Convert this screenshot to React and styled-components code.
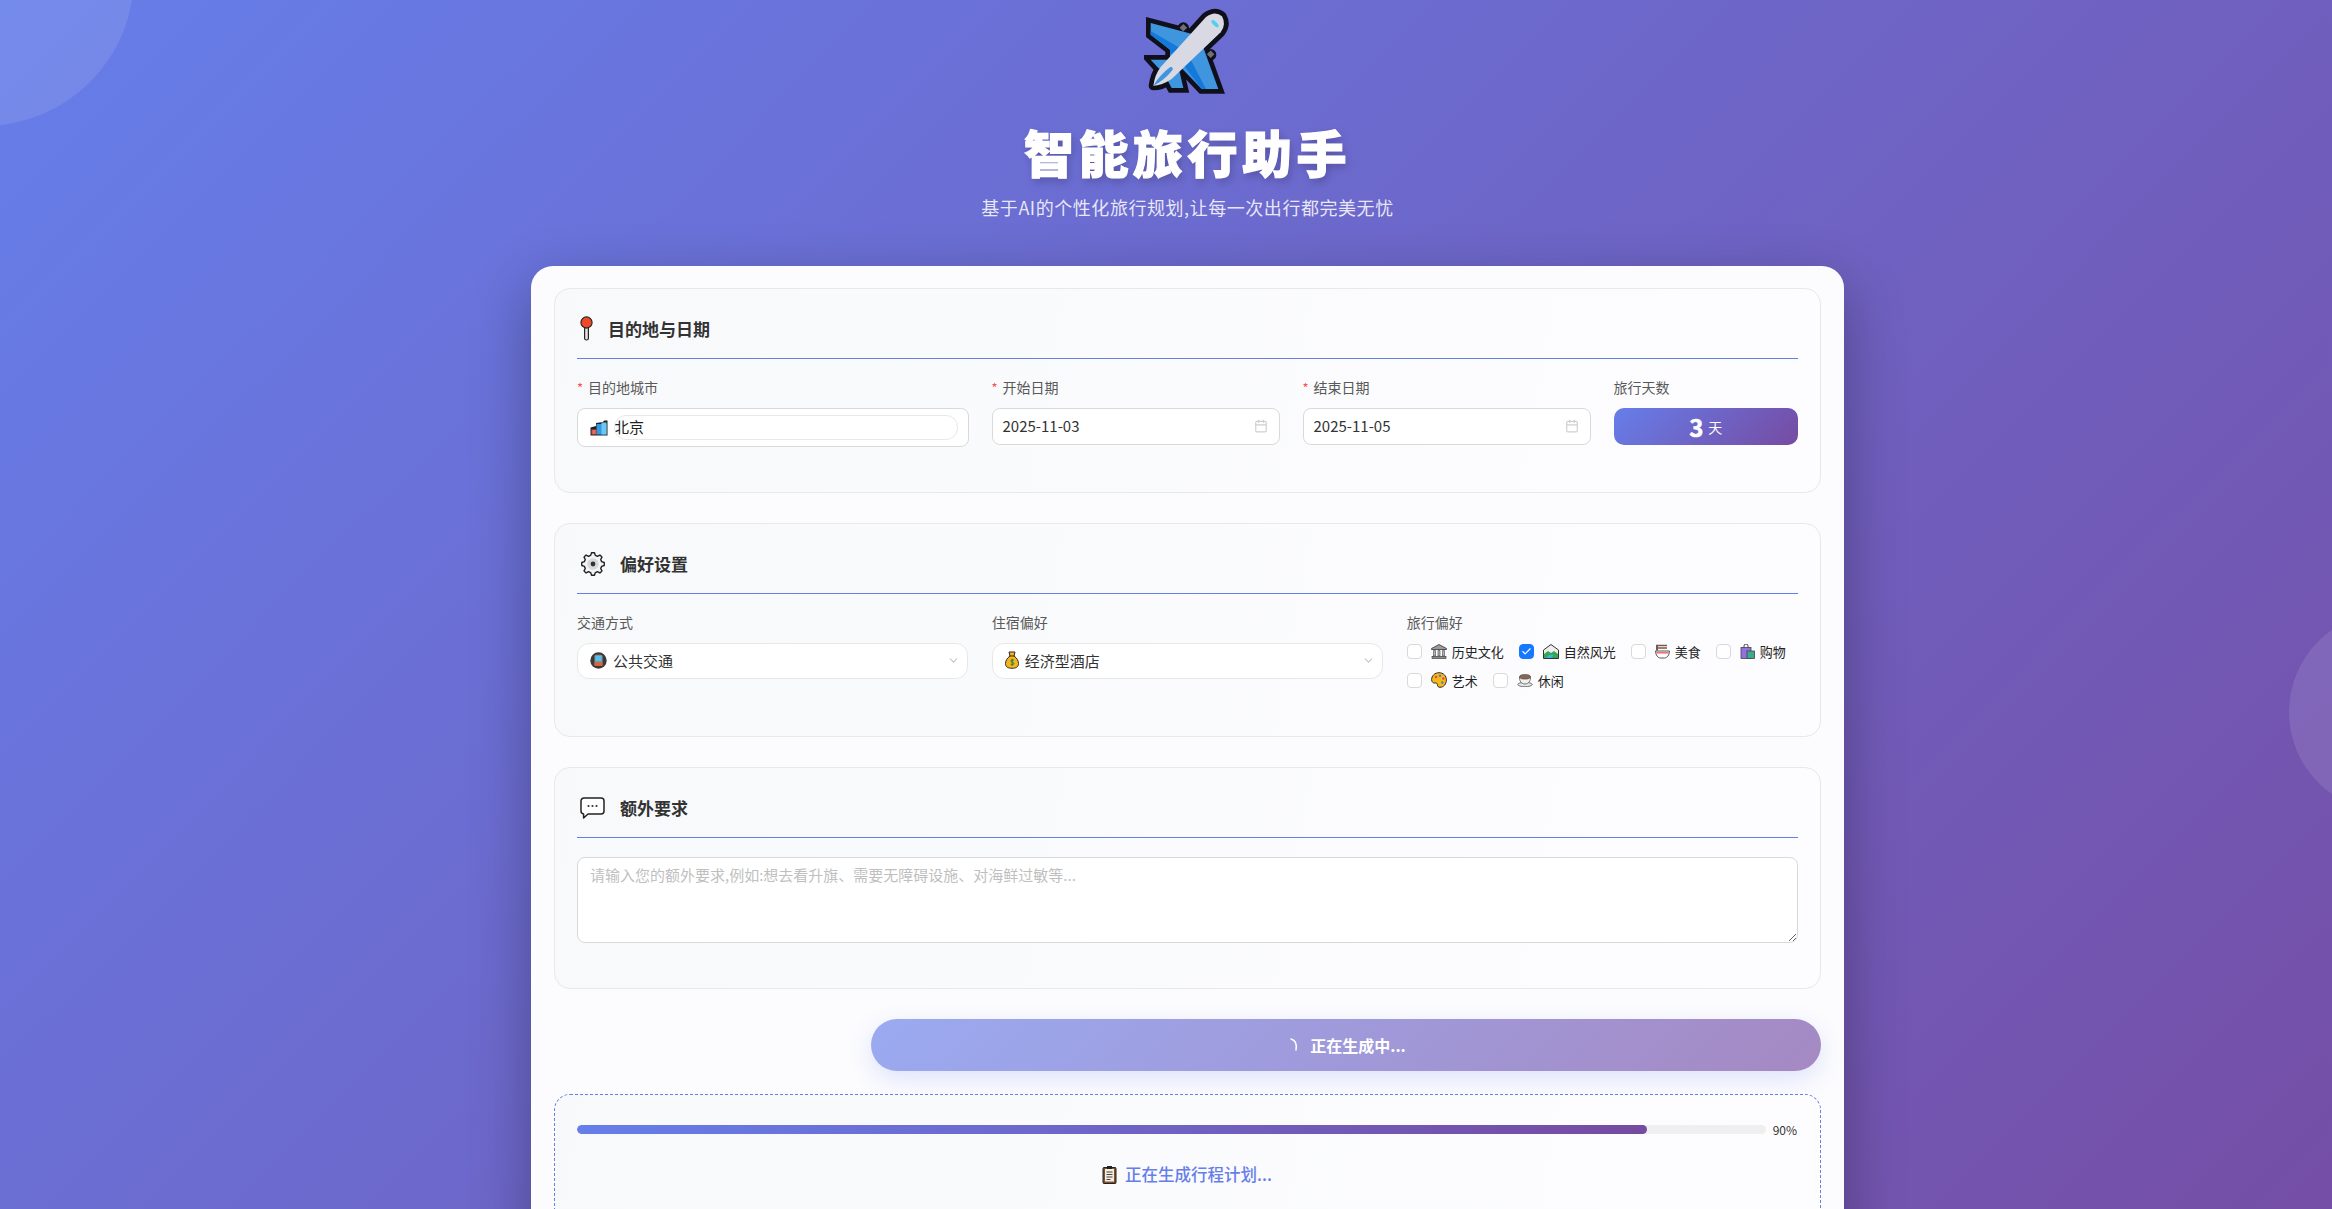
import React from 'react';
import styled, { createGlobalStyle } from 'styled-components';
import { Calendar, ChevronDown, Check } from 'lucide-react';

const GlobalStyle = createGlobalStyle`
  html, body {
    margin: 0;
    padding: 0;
    height: 1209px;
    overflow: hidden;
    font-family: "Noto Sans CJK SC", "Noto Sans", sans-serif;
  }
  * { box-sizing: border-box; }
`;

const Page = styled.div`
  position: relative;
  height: 1209px;
  overflow: hidden;
  padding: 0 488px 0 531px;
  background: linear-gradient(135deg, #667eea 0%, #764ba2 100%) 0 0 / 100% 1450px;
`;

const Bubble = styled.div`
  position: absolute;
  top: ${(p) => p.$top}px;
  left: ${(p) => p.$left}px;
  width: ${(p) => p.$size}px;
  height: ${(p) => p.$size}px;
  border-radius: 50%;
  background: rgba(255, 255, 255, 0.1);
`;

const Header = styled.header`
  position: relative;
  display: flex;
  flex-direction: column;
  align-items: center;
  height: 266px;
  padding-top: 7px;
  color: #fff;
`;

const PlaneBox = styled.div`
  display: flex;
  height: 88px;
`;

const Title = styled.h1`
  margin: 20px 0 6px;
  font-size: 50px;
  line-height: 72px;
  font-weight: 900;
  letter-spacing: 4.5px;
  -webkit-text-stroke: 1.2px #fff;
  text-shadow: 2px 4px 8px rgba(0, 0, 0, 0.22);
`;

const Subtitle = styled.p`
  margin: 0;
  font-size: 18px;
  line-height: 28px;
  letter-spacing: 0.55px;
  color: rgba(255, 255, 255, 0.85);
`;

const Card = styled.main`
  position: relative;
  display: flex;
  flex-direction: column;
  height: 1100px;
  padding: 22px 23px 0;
  border-radius: 22px;
  background: rgba(255, 255, 255, 0.98);
  box-shadow: 0 20px 60px rgba(0, 0, 0, 0.3);
`;

const Section = styled.section`
  padding: 0 22px 45px;
  margin-bottom: 30px;
  border: 1px solid #e8e8e8;
  border-radius: 16px;
  background: linear-gradient(100deg, #f8f9fb 0%, #fdfdff 100%);
`;

const SectionHead = styled.div`
  display: flex;
  align-items: center;
  gap: 12px;
  height: 70px;
  padding: 24px 0 14px;
  margin-bottom: ${(p) => p.$gap || 17}px;
  border-bottom: 1px solid #667eea;
  font-size: 17px;
  font-weight: 700;
  color: #333;
`;

const HeadIcon = styled.span`
  display: flex;
  justify-content: center;
  width: ${(p) => p.$width}px;
`;

const FieldGrid = styled.div`
  display: grid;
  grid-template-columns: ${(p) => p.$columns};
  column-gap: ${(p) => p.$gap}px;
`;

const Label = styled.label`
  display: block;
  height: 22px;
  margin-bottom: 10px;
  font-size: 14px;
  line-height: 22px;
  color: #595959;
  &::before {
    content: ${(p) => (p.$required ? '"*"' : 'none')};
    margin-right: 5px;
    color: #ff4d4f;
    font-size: 13px;
  }
`;

const CityBox = styled.div`
  display: flex;
  align-items: center;
  height: 39px;
  padding: 0 10px 0 12px;
  border: 1px solid #d9d9d9;
  border-radius: 8px;
  background: #fff;
`;

const CityInput = styled.input`
  flex: 1;
  min-width: 0;
  height: 25px;
  margin-left: 6px;
  padding: 0 0 2px;
  border: 1px solid #e8e8e8;
  border-radius: 12px;
  outline: none;
  background: #fff;
  font: inherit;
  font-size: 15px;
  text-indent: -1px;
  color: #222;
`;

const DateBox = styled.div`
  display: flex;
  align-items: center;
  justify-content: space-between;
  height: 37px;
  padding: 0 11px 2px 10px;
  border: 1px solid #d9d9d9;
  border-radius: 8px;
  background: #fff;
  font-size: 15px;
  color: #333;
`;

const DaysBox = styled.div`
  display: flex;
  align-items: center;
  justify-content: center;
  gap: 5px;
  height: 37px;
  border-radius: 10px;
  background: linear-gradient(135deg, #667eea, #764ba2);
  color: #fff;
  font-size: 14px;
  strong {
    font-size: 24px;
    font-weight: 700;
    line-height: 1;
    -webkit-text-stroke: 0.5px #fff;
  }
`;

const SelectBox = styled.div`
  display: flex;
  align-items: center;
  gap: 6px;
  height: 36px;
  padding: 0 7px 2px 12px;
  border: 1px solid #e8e8e8;
  border-radius: 12px;
  background: #fff;
  font-size: 15px;
  color: #333;
  svg:last-child {
    margin-left: auto;
  }
`;

const CheckGroup = styled.div`
  display: flex;
  flex-wrap: wrap;
  align-content: flex-start;
  column-gap: 15px;
  row-gap: 7px;
  height: 51px;
  margin-top: -3px;
`;

const CheckItem = styled.label`
  display: flex;
  align-items: center;
  height: 22px;
  font-size: 13px;
  color: #222;
`;

const CheckBox = styled.span`
  display: flex;
  align-items: center;
  justify-content: center;
  width: 15px;
  height: 15px;
  margin-right: 9px;
  border: 1px solid ${(p) => (p.$checked ? '#1677ff' : '#d9d9d9')};
  border-radius: 4px;
  background: ${(p) => (p.$checked ? '#1677ff' : '#fff')};
`;

const CheckIcon = styled.span`
  display: flex;
  margin-right: 5px;
`;

const Notes = styled.textarea`
  display: block;
  width: 100%;
  height: 86px;
  padding: 6px 12px;
  border: 1px solid #d9d9d9;
  border-radius: 8px;
  outline: none;
  background: #fff;
  font: inherit;
  font-size: 15px;
  line-height: 22px;
  &::placeholder {
    color: #bfbfbf;
  }
`;

const GenerateButton = styled.button`
  display: flex;
  flex: none;
  align-items: center;
  justify-content: center;
  gap: 10px;
  align-self: flex-end;
  width: 950px;
  height: 52px;
  margin-bottom: 23px;
  padding-left: 10px;
  border: 0;
  border-radius: 26px;
  background: linear-gradient(135deg, rgba(102, 126, 234, 0.65), rgba(118, 75, 162, 0.65));
  box-shadow: 0 8px 24px rgba(102, 126, 234, 0.2);
  color: #fff;
  font: inherit;
  font-size: 16px;
  font-weight: 700;
`;

const ProgressPanel = styled.section`
  flex: none;
  height: 220px;
  padding: 24px 23px 24px 22px;
  border: 1px dashed #667eea;
  border-radius: 16px;
  background: linear-gradient(100deg, #f8f9fb 0%, #fdfdff 100%);
`;

const ProgressRow = styled.div`
  display: flex;
  align-items: center;
  gap: 7px;
  height: 20px;
  font-size: 12px;
  color: #333;
`;

const ProgressTrack = styled.div`
  flex: 1;
  height: 9px;
  border-radius: 5px;
  background: #efefef;
  overflow: hidden;
`;

const ProgressFill = styled.div`
  height: 100%;
  border-radius: 5px;
  background: linear-gradient(90deg, #667eea, #764ba2);
`;

const Status = styled.div`
  display: flex;
  align-items: center;
  justify-content: center;
  gap: 8px;
  margin-top: 23px;
  font-size: 16.5px;
  font-weight: 500;
  color: #667eea;
`;

const Plane = () => {
  const wingA = 'M92 70 L225 105 L150 190 L150 150 L92 105 Z';
  const wingB = 'M245 130 L295 268 L245 268 L170 190 Z';
  const tailA = 'M92 180 L150 180 L130 214 L115 205 Z';
  const tailB = 'M128 215 L175 200 L190 265 L155 265 Z';
  const body = 'M258 52 Q285 32 306 50 Q320 75 302 98 L155 238 Q125 258 100 258 Q104 226 122 202 Z';
  const ink = { fill: '#10101c', stroke: '#10101c', strokeWidth: 28, strokeLinejoin: 'miter' };
  return (
    <svg width="88" height="88" viewBox="72 22 264 264">
      <circle cx="190" cy="85" r="17" fill="#10101c" />
      <circle cx="272" cy="165" r="17" fill="#10101c" />
      <path d={wingA} {...ink} />
      <path d={wingB} {...ink} />
      <path d={tailA} {...ink} />
      <path d={tailB} {...ink} />
      <path d={body} {...ink} strokeLinejoin="round" />
      <rect x="182" y="76" width="16" height="16" fill="#6f6f78" transform="rotate(45 190 84)" />
      <rect x="264" y="156" width="16" height="16" fill="#6f6f78" transform="rotate(45 272 164)" />
      <path d={wingA} fill="#3f95de" />
      <path d="M92 94 L180 145 L150 165 L150 150 L92 105 Z" fill="#1479d9" />
      <path d={wingB} fill="#3f95de" />
      <path d="M190 195 L245 268 L258 268 L212 180 Z" fill="#1479d9" />
      <path d={tailA} fill="#3f95de" />
      <path d={tailB} fill="#3f95de" />
      <path d={body} fill="#d9d9e4" />
      <path d="M100 258 Q120 225 150 203 Q160 200 158 210 Q135 240 100 258 Z" fill="#3f95de" />
      <ellipse cx="285" cy="72" rx="14" ry="6" transform="rotate(45 285 72)" fill="#4dd2f2" />
    </svg>
  );
};

const PinIcon = () => (
  <svg width="13" height="25" viewBox="0 0 13 25">
    <rect x="4.6" y="11" width="3.8" height="13" rx="1.8" fill="#e4e4e4" stroke="#222" strokeWidth="1.2" />
    <circle cx="6.5" cy="6.5" r="5.6" fill="#ee4a2a" stroke="#222" strokeWidth="1.1" />
  </svg>
);

const cogPath = () => {
  const points = [];
  for (let i = 0; i < 48; i += 1) {
    const phase = i % 6;
    const r = phase < 3 ? 11.3 : 8.9;
    const a = ((i - 1) / 48) * Math.PI * 2;
    points.push(`${(12 + r * Math.cos(a)).toFixed(2)} ${(12 + r * Math.sin(a)).toFixed(2)}`);
  }
  return `M${points.join(' L')} Z`;
};

const GearIcon = () => (
  <svg width="24" height="24" viewBox="0 0 24 24">
    <path d={cogPath()} fill="#f4f4f4" stroke="#222" strokeWidth="1.4" strokeLinejoin="round" />
    <circle cx="12" cy="12" r="5.8" fill="#d8d8d8" />
    <circle cx="12" cy="12" r="2.4" fill="#333" />
  </svg>
);

const SpeechIcon = () => (
  <svg width="25" height="22" viewBox="0 0 25 22">
    <path
      d="M4 1h17a3 3 0 0 1 3 3v10a3 3 0 0 1-3 3H8l-4.4 4v-4A3 3 0 0 1 1 14V4a3 3 0 0 1 3-3z"
      fill="#fff"
      stroke="#222"
      strokeWidth="1.5"
      strokeLinejoin="round"
    />
    <circle cx="8.5" cy="9" r="1.1" fill="#333" />
    <circle cx="12.5" cy="9" r="1.1" fill="#333" />
    <circle cx="16.5" cy="9" r="1.1" fill="#333" />
  </svg>
);

const CityIcon = () => (
  <svg width="18" height="16" viewBox="0 0 18 16">
    <path d="M.5 7.500L6 6V3l7-1 1-1.500h3.500V15.500H.5z" fill="#222" />
    <rect x="6.500" y="4" width="10" height="10.500" fill="#2f9ae6" />
    <rect x="11.500" y="2.500" width="5" height="12" fill="#6cc6ef" />
    <rect x="1.500" y="9.500" width="5" height="5" fill="#d94a3d" />
    <path d="M2.500 11h3M2.500 13h3" stroke="#f4b0a8" strokeWidth="0.7" />
  </svg>
);

const MetroIcon = () => (
  <svg width="17" height="17" viewBox="0 0 17 17">
    <circle cx="8.5" cy="8.5" r="8.2" fill="#3a3a3a" />
    <rect x="4.5" y="2.8" width="8" height="11" rx="1.5" fill="#8d8d8d" />
    <rect x="5.5" y="4" width="6" height="5" fill="#4fc3ee" />
    <rect x="4.5" y="10.5" width="8" height="3.3" fill="#e0603a" />
  </svg>
);

const BagIcon = () => (
  <svg width="14" height="18" viewBox="0 0 14 18">
    <path
      d="M4 1h6L9 5c3 2 4.500 5 4.500 7.500C13.500 16 11 17.300 7 17.300S.5 16 .5 12.500C.5 10 2 7 5 5z"
      fill="#f6b31b"
      stroke="#2a2a2a"
    />
    <path d="M4.500 5h5" stroke="#2a2a2a" />
    <path d="M8.800 9.300C8 8.500 5.800 8.600 5.800 10s3 1 3 2.500-2.300 1.600-3.200.7M7.200 7.800v7" fill="none" stroke="#17813a" strokeWidth="1" />
  </svg>
);

const MuseumIcon = () => (
  <svg width="16" height="15" viewBox="0 0 16 15">
    <path d="M8 .5L15.500 4.500v1H.5v-1z" fill="#9a9a9a" stroke="#333" strokeWidth="0.8" />
    <path d="M2.500 6.500h2v5.500h-2zM7 6.500h2v5.500H7zM11.500 6.500h2v5.500h-2z" fill="#b5b5b5" stroke="#444" strokeWidth="0.6" />
    <rect x="1" y="12.300" width="14" height="2.200" fill="#8a8a8a" stroke="#333" strokeWidth="0.6" />
  </svg>
);

const NatureIcon = () => (
  <svg width="16" height="15" viewBox="0 0 16 15">
    <path d="M8 .5L15.500 6v8.500H.5V6z" fill="#eee" stroke="#333" />
    <path d="M1 14V10l4-3 3 2 3-2 4 3v4z" fill="#34a853" />
    <path d="M3 14l3-3h5l-3 3z" fill="#3ab4e8" />
  </svg>
);

const RamenIcon = () => (
  <svg width="15" height="15" viewBox="0 0 15 15">
    <path d="M1 1.500h11M1 4h11" stroke="#7a5a45" strokeWidth="1.600" />
    <path d="M2 1.500v5" stroke="#7a5a45" strokeWidth="2" />
    <path d="M.5 7h14c0 4-2.500 7-5 7h-4c-2.500 0-5-3-5-7z" fill="#fff" stroke="#444" strokeWidth="0.9" />
    <path d="M1.200 8.800h12.600" stroke="#e9757f" strokeWidth="1.600" />
  </svg>
);

const ShoppingIcon = () => (
  <svg width="15" height="15" viewBox="0 0 15 15">
    <path d="M4 3.500V2a2 2 0 0 1 4 0v1.500" fill="none" stroke="#444" />
    <rect x="1" y="3.500" width="10" height="11" fill="#9370e0" stroke="#444" strokeWidth="0.8" />
    <rect x="7" y="7" width="7.500" height="7.500" fill="#3cab8d" stroke="#444" strokeWidth="0.8" />
  </svg>
);

const PaletteIcon = () => (
  <svg width="16" height="16" viewBox="0 0 16 16">
    <path
      d="M8 .7C3.800.7.600 3.800.600 7.600c0 2.700 2 3.700 3.300 3.400 1.500-.3 2.500.4 2.500 1.800 0 1.600 1.100 2.500 2.600 2.500 3.800 0 6.400-3.500 6.400-7.400C15.400 3.800 12.300.7 8 .7z"
      fill="#f7b916"
      stroke="#2d2d2d"
    />
    <circle cx="5" cy="5" r="1.300" fill="#e5484d" />
    <circle cx="9" cy="3.800" r="1.200" fill="#3f7fe0" />
    <circle cx="12.300" cy="6.500" r="1.200" fill="#e5484d" />
    <circle cx="11.300" cy="10.500" r="1.200" fill="#3f7fe0" />
  </svg>
);

const CoffeeIcon = () => (
  <svg width="16" height="14" viewBox="0 0 16 14">
    <ellipse cx="8" cy="11.500" rx="7.200" ry="2.200" fill="#e8e8e8" stroke="#555" strokeWidth="0.8" />
    <path d="M2.500 3.500h11c.3 4-1.500 7.500-5.500 7.500s-5.800-3.500-5.500-7.500z" fill="#f0f0f0" stroke="#555" strokeWidth="0.8" />
    <ellipse cx="8" cy="3.800" rx="5.300" ry="2.300" fill="#8a6550" stroke="#555" strokeWidth="0.7" />
  </svg>
);

const ClipboardIcon = () => (
  <svg width="15" height="19" viewBox="0 0 15 19">
    <rect x="1" y="2.500" width="13" height="16" rx="1" fill="#7a5230" stroke="#222" />
    <rect x="3" y="4" width="9" height="12.500" fill="#f6efe0" />
    <path d="M4.500 7h6M4.500 9.500h6M4.500 12h6M4.500 14.500h4" stroke="#444" />
    <rect x="5" y="1" width="5" height="3" fill="#222" />
  </svg>
);

const Spinner = () => (
  <svg width="10" height="14" viewBox="0 0 10 14">
    <path d="M1 1c4 1 6 5 5 11" fill="none" stroke="#fff" strokeWidth="1.500" strokeLinecap="round" />
  </svg>
);

const preferences = [
  { name: '历史文化', icon: <MuseumIcon /> },
  { name: '自然风光', icon: <NatureIcon />, checked: true },
  { name: '美食', icon: <RamenIcon /> },
  { name: '购物', icon: <ShoppingIcon /> },
  { name: '艺术', icon: <PaletteIcon /> },
  { name: '休闲', icon: <CoffeeIcon /> },
];

const DateField = ({ label, value }) => (
  <div>
    <Label $required>{label}</Label>
    <DateBox>
      {value}
      <Calendar size={14} color="#cfcfcf" />
    </DateBox>
  </div>
);

const App = () => (
  <Page>
    <GlobalStyle />
    <Bubble $top={-174} $left={-166} $size={300} />
    <Bubble $top={612} $left={2289} $size={200} />
    <Header>
      <PlaneBox><Plane /></PlaneBox>
      <Title>智能旅行助手</Title>
      <Subtitle>基于AI的个性化旅行规划,让每一次出行都完美无忧</Subtitle>
    </Header>
    <Card>
      <Section>
        <SectionHead>
          <HeadIcon $width={19}><PinIcon /></HeadIcon>
          目的地与日期
        </SectionHead>
        <FieldGrid $columns="391.5px 288px 288px 1fr" $gap={23}>
          <div>
            <Label $required>目的地城市</Label>
            <CityBox>
              <CityIcon />
              <CityInput readOnly value="北京" />
            </CityBox>
          </div>
          <DateField label="开始日期" value="2025-11-03" />
          <DateField label="结束日期" value="2025-11-05" />
          <div>
            <Label>旅行天数</Label>
            <DaysBox><strong>3</strong>天</DaysBox>
          </div>
        </FieldGrid>
      </Section>

      <Section>
        <SectionHead>
          <HeadIcon $width={31}><GearIcon /></HeadIcon>
          偏好设置
        </SectionHead>
        <FieldGrid $columns="1fr 1fr 1fr" $gap={23.5}>
          <div>
            <Label>交通方式</Label>
            <SelectBox>
              <MetroIcon />
              公共交通
              <ChevronDown size={13} color="#c4c4c4" />
            </SelectBox>
          </div>
          <div>
            <Label>住宿偏好</Label>
            <SelectBox>
              <BagIcon />
              经济型酒店
              <ChevronDown size={13} color="#c4c4c4" />
            </SelectBox>
          </div>
          <div>
            <Label>旅行偏好</Label>
            <CheckGroup>
              {preferences.map((item) => (
                <CheckItem key={item.name}>
                  <CheckBox $checked={item.checked}>
                    {item.checked && <Check size={11} color="#fff" strokeWidth={2.5} />}
                  </CheckBox>
                  <CheckIcon>{item.icon}</CheckIcon>
                  {item.name}
                </CheckItem>
              ))}
            </CheckGroup>
          </div>
        </FieldGrid>
      </Section>

      <Section>
        <SectionHead $gap={19}>
          <HeadIcon $width={31}><SpeechIcon /></HeadIcon>
          额外要求
        </SectionHead>
        <Notes placeholder="请输入您的额外要求,例如:想去看升旗、需要无障碍设施、对海鲜过敏等..." />
      </Section>

      <GenerateButton>
        <Spinner />
        正在生成中...
      </GenerateButton>

      <ProgressPanel>
        <ProgressRow>
          <ProgressTrack>
            <ProgressFill style={{ width: '90%' }} />
          </ProgressTrack>
          90%
        </ProgressRow>
        <Status>
          <ClipboardIcon />
          正在生成行程计划...
        </Status>
      </ProgressPanel>
    </Card>
  </Page>
);

export default App;
